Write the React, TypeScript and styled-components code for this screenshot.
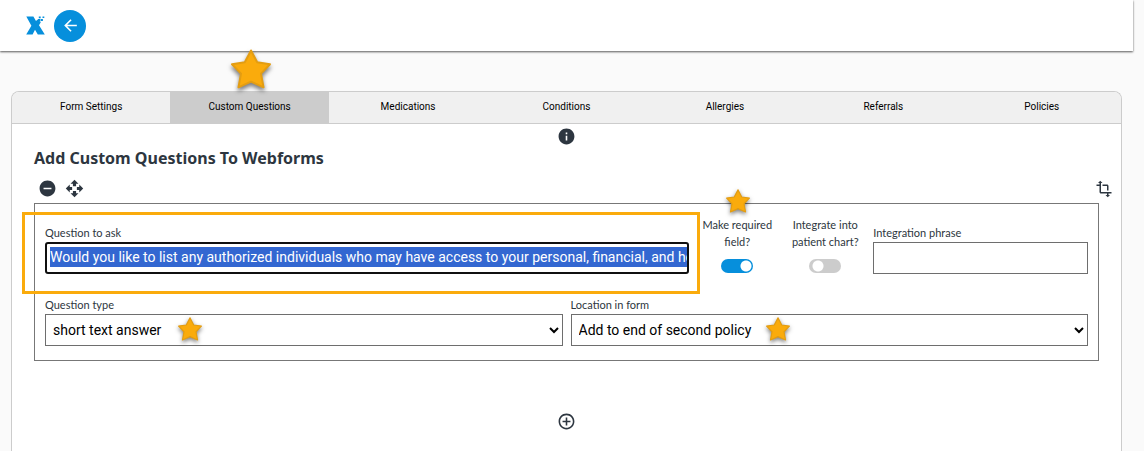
import React, { useId, useState } from "react";
import styled, { createGlobalStyle, css } from "styled-components";

const BLUE = "#068fdc";
const AMBER = "#faab0c";
const INK = "#2d3640";

const GlobalStyle = createGlobalStyle`
  *, *::before, *::after { box-sizing: border-box; }
  html { background: #fafafa; }
  body { margin: 0; overflow-x: hidden; font-family: "Open Sans", "Noto Sans", sans-serif; color: ${INK}; }
  #root { height: 100vh; overflow: hidden; }
`;

const Page = styled.div`
  display: flex;
  flex-direction: column;
  height: 100vh;
  padding-right: 11px;
`;

const Header = styled.header`
  display: flex;
  align-items: center;
  flex: none;
  gap: 9px;
  height: 51px;
  padding-left: 26px;
  background: #fff;
  box-shadow: 0 1px 2px rgba(0, 0, 0, 0.65);
`;

const BackButton = styled.button`
  display: flex;
  align-items: center;
  justify-content: center;
  width: 32px;
  height: 32px;
  padding: 0;
  border: 0;
  border-radius: 50%;
  background: ${BLUE};
`;

const Card = styled.main`
  flex: 1 0 auto;
  margin: 40px 11px 0;
  border: 1px solid #ccc;
  border-bottom: 0;
  border-radius: 8px 8px 0 0;
  background: #fff;
`;

const Tabs = styled.nav`
  display: flex;
  border-bottom: 1px solid #ccc;
  border-radius: 7px 7px 0 0;
  background: #f0f0f0;
`;

const Tab = styled.button<{ $active: boolean }>`
  position: relative;
  flex: 1 1 0;
  height: 31px;
  padding: 0 0 2px;
  border: 0;
  background: ${(p) => (p.$active ? "#ccc" : "transparent")};
  color: #000;
  font: 10px/16px Roboto, sans-serif;
`;

const Content = styled.div`
  padding: 3px 22px 0;
`;

const Centered = styled.div`
  display: flex;
  justify-content: center;
`;

const IconButton = styled.button`
  display: flex;
  padding: 0;
  border: 0;
  background: none;
  color: ${INK};
`;

const Title = styled.h1`
  margin: 0 0 9px;
  font: 700 16px/24px "Noto Sans", "Open Sans", sans-serif;
`;

const Tools = styled.div`
  display: flex;
  align-items: center;
  gap: 8px;
  height: 19px;
  margin: 0 -14px 5px 4px;
`;

const Spacer = styled.span`
  flex: 1;
`;

const Question = styled.section`
  padding: 12px 10px 14px;
  border: 1px solid #777;
`;

const Row = styled.div`
  display: flex;
  align-items: flex-end;
  gap: 8px;
`;

const SelectRow = styled(Row)`
  margin-top: 22px;
`;

const Field = styled.div<{ $grow: number }>`
  position: relative;
  display: flex;
  flex: ${(p) => p.$grow} 1 0;
  flex-direction: column;
  min-width: 0;
`;

const labelText = css`
  font: 11px/17px Lato, "Open Sans", sans-serif;
  color: ${INK};
`;

const Label = styled.label`
  margin-bottom: 1px;
  ${labelText}
`;

const control = css`
  width: 100%;
  height: 32px;
  border: 1px solid #6e6e6e;
  border-radius: 0;
  background: #fff;
  color: #000;
  font: 14px/20px Roboto, sans-serif;
`;

const TextInput = styled.input<{ $focused?: boolean }>`
  ${control}
  padding: 0 4px;
  outline: none;
  ${(p) =>
    p.$focused &&
    css`
      border: 2px solid #101010;
      border-radius: 3px;
      padding: 0 0 2px 3px;
      color: #fff;
      background: linear-gradient(#3367d1, #3367d1) 3px 3px / 100% 20px no-repeat #fff;
    `}
`;

const Select = styled.select`
  ${control}
  padding: 0 3px;
`;

const Highlight = styled.div`
  position: absolute;
  inset: -12px -11px -20px -23px;
  border: 3px solid ${AMBER};
  pointer-events: none;
`;

const Toggle = styled.label`
  position: relative;
  display: flex;
  flex-direction: column;
  align-items: center;
  width: 80px;
  text-align: center;
  ${labelText}
`;

const Switch = styled.input`
  appearance: none;
  width: 32px;
  height: 14px;
  margin: 9px 0 1px;
  border-radius: 7px;
  background: radial-gradient(circle at 9px 7px, #fff 5px, transparent 6px) #ccc;
  &:checked {
    background: radial-gradient(circle at 25px 7px, #fff 5px, transparent 6px) ${BLUE};
  }
`;

const AddArea = styled(Centered)`
  padding-top: 51px;
`;

const StarMark = styled.svg<{ $size: number; $left: string; $top: number }>`
  position: absolute;
  z-index: 1;
  left: ${(p) => p.$left};
  top: ${(p) => p.$top}px;
  width: ${(p) => p.$size}px;
  height: ${(p) => p.$size}px;
  overflow: visible;
  pointer-events: none;
  filter: drop-shadow(0 ${(p) => (p.$size > 30 ? 3 : 2)}px 2px rgba(0, 0, 0, 0.5));
`;

function Star(props: { size: number; left: string; top: number }) {
  return (
    <StarMark viewBox="0 0 40 40" aria-hidden $size={props.size} $left={props.left} $top={props.top}>
      <path
        d="M20 1.5 26.2 13.3 39 15.2 30 24.6 32.5 38.3 20 32.7 7.5 38.3 10 24.6 1 15.2 13.8 13.3Z"
        fill={AMBER}
        stroke="#e39d12"
        strokeWidth="2"
        strokeLinejoin="round"
      />
    </StarMark>
  );
}

function Logo() {
  return (
    <svg width="19" height="19" viewBox="0 0 19 19" fill={BLUE} role="img" aria-label="Home">
      <path d="M.3.5H7.4L10 5 11.6 3.6 14.8 6.2 13 9.2 18.8 18.5H11.8L9 13.8 6.6 18.5H.2L5.4 9.7Z" />
      <path d="M12 3h2.4v2.5H12zM14.9 2.9h2v2h-2zM12.8.5h1.9v1.7h-1.9zM16.5.4h1.8v1.6h-1.8z" />
    </svg>
  );
}

function Glyph({ size = 19, d }: { size?: number; d: string }) {
  return (
    <svg width={size} height={size} viewBox="0 0 24 24" fill="currentColor" aria-hidden>
      <path d={d} />
    </svg>
  );
}

const paths = {
  back: "M20 11H7.83l5.59-5.59L12 4l-8 8 8 8 1.41-1.41L7.83 13H20v-2z",
  info: "M12 2C6.48 2 2 6.48 2 12s4.48 10 10 10 10-4.48 10-10S17.52 2 12 2zm1 15h-2v-6h2v6zm0-8h-2V7h2v2z",
  minus: "M12 2C6.48 2 2 6.48 2 12s4.48 10 10 10 10-4.48 10-10S17.52 2 12 2zm5 11H7v-2h10v2z",
  move: "M10 9h4V6h3l-5-5-5 5h3v3zm-1 1H6V7l-5 5 5 5v-3h3v-4zm14 2l-5-5v3h-3v4h3v3l5-5zm-9 3h-4v3H7l5 5 5-5h-3v-3z",
  transform: "M22 18v-2H8V4h2L7 1 4 4h2v2H2v2h4v8c0 1.1.9 2 2 2h8v2h-2l3 3 3-3h-2v-2h4zM10 8h6v6h2V8c0-1.1-.9-2-2-2h-6v2z",
  add: "M13 7h-2v4H7v2h4v4h2v-4h4v-2h-4V7zm-1-5C6.48 2 2 6.48 2 12s4.48 10 10 10 10-4.48 10-10S17.52 2 12 2zm0 18c-4.41 0-8-3.59-8-8s3.59-8 8-8 8 3.59 8 8-3.59 8-8 8z",
};

const tabNames = ["Form Settings", "Custom Questions", "Medications", "Conditions", "Allergies", "Referrals", "Policies"];

export default function App() {
  const id = useId();
  const [active, setActive] = useState("Custom Questions");
  const [required, setRequired] = useState(true);
  const [integrate, setIntegrate] = useState(false);

  return (
    <Page>
      <GlobalStyle />
      <Header>
        <Logo />
        <BackButton aria-label="Back">
          <svg width="19" height="19" viewBox="0 0 24 24" fill="#fff" aria-hidden>
            <path d={paths.back} />
          </svg>
        </BackButton>
      </Header>
      <Card>
        <Tabs>
          {tabNames.map((name) => (
            <Tab key={name} $active={name === active} onClick={() => setActive(name)}>
              {name}
              {name === "Custom Questions" && <Star size={40} left="calc(50% - 19px)" top={-43} />}
            </Tab>
          ))}
        </Tabs>
        <Content>
          <Centered>
            <IconButton aria-label="Information">
              <Glyph d={paths.info} />
            </IconButton>
          </Centered>
          <Title>Add Custom Questions To Webforms</Title>
          <Tools>
            <IconButton aria-label="Remove question">
              <Glyph d={paths.minus} />
            </IconButton>
            <IconButton aria-label="Move question">
              <Glyph d={paths.move} />
            </IconButton>
            <Spacer />
            <IconButton aria-label="Resize question">
              <Glyph size={18} d={paths.transform} />
            </IconButton>
          </Tools>
          <Question>
            <Row>
              <Field $grow={3}>
                <Label htmlFor={`${id}q`}>Question to ask</Label>
                <TextInput
                  id={`${id}q`}
                  $focused
                  defaultValue="Would you like to list any authorized individuals who may have access to your personal, financial, and health information?"
                />
                <Highlight />
              </Field>
              <Toggle>
                Make required field?
                <Switch type="checkbox" checked={required} onChange={(e) => setRequired(e.target.checked)} />
                <Star size={24} left="calc(50% - 11px)" top={-27} />
              </Toggle>
              <Toggle>
                Integrate into patient chart?
                <Switch type="checkbox" checked={integrate} onChange={(e) => setIntegrate(e.target.checked)} />
              </Toggle>
              <Field $grow={1}>
                <Label htmlFor={`${id}p`}>Integration phrase</Label>
                <TextInput id={`${id}p`} />
              </Field>
            </Row>
            <SelectRow>
              <Field $grow={1}>
                <Label htmlFor={`${id}t`}>Question type</Label>
                <Select id={`${id}t`}>
                  <option>short text answer</option>
                </Select>
                <Star size={24} left="133px" top={21} />
              </Field>
              <Field $grow={1}>
                <Label htmlFor={`${id}l`}>Location in form</Label>
                <Select id={`${id}l`}>
                  <option>Add to end of second policy</option>
                </Select>
                <Star size={24} left="195px" top={21} />
              </Field>
            </SelectRow>
          </Question>
          <AddArea>
            <IconButton aria-label="Add question">
              <Glyph d={paths.add} />
            </IconButton>
          </AddArea>
        </Content>
      </Card>
    </Page>
  );
}
